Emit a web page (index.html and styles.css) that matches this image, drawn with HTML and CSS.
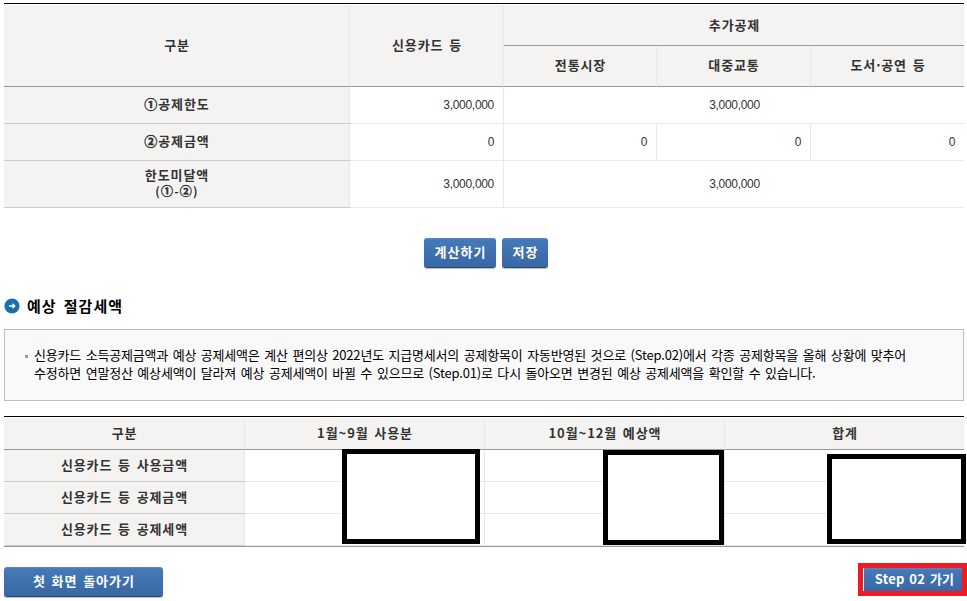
FILE: index.html
```html
<!DOCTYPE html>
<html lang="ko">
<head>
<meta charset="utf-8">
<title>예상 절감세액</title>
<link rel="stylesheet" href="styles.css">
</head>
<body>
<main class="page">
  <section class="grid limits">
    <div class="cell head tall">구분</div>
    <div class="cell head tall">신용카드 등</div>
    <div class="cell head wide group">추가공제</div>
    <div class="cell head">전통시장</div>
    <div class="cell head">대중교통</div>
    <div class="cell head last">도서·공연 등</div>

    <div class="cell label"><span><span class="circled">①</span>공제한도</span></div>
    <div class="cell num">3,000,000</div>
    <div class="cell num wide">3,000,000</div>

    <div class="cell label"><span><span class="circled">②</span>공제금액</span></div>
    <div class="cell num">0</div>
    <div class="cell num">0</div>
    <div class="cell num">0</div>
    <div class="cell num last">0</div>

    <div class="cell label stack"><span>한도미달액</span><span class="formula">(<span class="circled">①</span>-<span class="circled">②</span>)</span></div>
    <div class="cell num">3,000,000</div>
    <div class="cell num wide">3,000,000</div>
  </section>

  <div class="actions">
    <button class="btn calc">계산하기</button>
    <button class="btn save">저장</button>
  </div>

  <h2 class="title">
    <svg class="title-icon" width="16" height="16" viewBox="0 0 16 16">
      <circle cx="8" cy="8" r="7.6" fill="#1b6fae"/>
      <path d="M5 8h5.5M8.5 5.7L10.8 8l-2.3 2.3" fill="none" stroke="#fff" stroke-width="1.3"/>
    </svg>
    <span>예상 절감세액</span>
  </h2>

  <div class="notice">
    <p class="line one">신용카드 소득공제금액과 예상 공제세액은 계산 편의상 2022년도 지급명세서의 공제항목이 자동반영된 것으로 (Step.02)에서 각종 공제항목을 올해 상황에 맞추어</p>
    <p class="line two">수정하면 연말정산 예상세액이 달라져 예상 공제세액이 바뀔 수 있으므로 (Step.01)로 다시 돌아오면 변경된 예상 공제세액을 확인할 수 있습니다.</p>
  </div>

  <section class="grid savings">
    <div class="cell head">구분</div>
    <div class="cell head">1월~9월 사용분</div>
    <div class="cell head">10월~12월 예상액</div>
    <div class="cell head last">합계</div>

    <div class="cell label">신용카드 등 사용금액</div>
    <div class="cell"></div><div class="cell"></div><div class="cell last"></div>
    <div class="cell label">신용카드 등 공제금액</div>
    <div class="cell"></div><div class="cell"></div><div class="cell last"></div>
    <div class="cell label">신용카드 등 공제세액</div>
    <div class="cell"></div><div class="cell"></div><div class="cell last"></div>

    <div class="mask first-mask"></div>
    <div class="mask second-mask"></div>
    <div class="mask third-mask"></div>
  </section>

  <footer class="nav">
    <button class="btn home">첫 화면 돌아가기</button>
    <div class="highlight"><button class="btn next">Step 02 가기</button></div>
  </footer>
</main>
</body>
</html>
```
FILE: styles.css
```css
* { box-sizing: border-box; }
body {
  margin: 0;
  background: #fff;
  color: #333;
  font: 13px/16px "Noto Sans CJK KR", sans-serif;
  overflow: hidden;
}
.page { width: 967px; height: 601px; padding: 3px 0 0 4px; }

.grid {
  display: grid;
  position: relative;
  width: 960px;
  border-top: 1px solid #000;
  padding-top: 1px;
}
.limits {
  grid-template-columns: 346px 154px 153px 154px 153px;
  grid-template-rows: 41px 41px 37px 37px 47px;
}
.savings {
  grid-template-columns: 241px 240px 240px 239px;
  grid-template-rows: 32px 32px 32px 32px;
  border-bottom: 1px solid #999;
}
.cell {
  display: flex;
  align-items: center;
  justify-content: center;
  text-align: center;
  white-space: nowrap;
  border-right: 1px solid #e8e8e8;
  border-bottom: 1px solid #e8e8e8;
}
.head, .label {
  padding: 0 0 2px 1px;
  background: #f5f3f2;
  font-weight: 700;
  letter-spacing: 0.9px;
  word-spacing: 1.2px;
}
.head { border-bottom-color: #999; }
.group { padding-bottom: 0; }
.label { border-bottom-color: #ccc; }
.stack { flex-direction: column; }
.circled { -webkit-text-stroke: 0.4px #333; }
.formula { font-size: 12px; letter-spacing: 1.2px; }
.tall { grid-row: span 2; }
.wide { grid-column: span 3; border-right: 0; }
.last { border-right: 0; }
.num {
  justify-content: flex-end;
  padding-right: 9px;
  font: 12px/16px "Liberation Sans", sans-serif;
  letter-spacing: -0.3px;
}
.num.wide { justify-content: center; padding: 0 0 0 1px; }

.actions { display: flex; justify-content: center; gap: 6px; width: 964px; margin-top: 30px; }
.btn {
  height: 30px;
  padding: 0 0 2px 1px;
  border: 0;
  border-bottom: 1px solid #264a7b;
  border-radius: 3px;
  background: linear-gradient(#5a8ac5 0, #4479b8 2px, #3967a4 100%);
  box-shadow: 0 1px 1px #bbb;
  color: #fff;
  font: 700 13px/16px "Noto Sans CJK KR", sans-serif;
  letter-spacing: 1px;
  word-spacing: 1px;
  white-space: nowrap;
}
.calc { width: 72px; }
.save { width: 46px; }

.title {
  display: flex;
  align-items: center;
  gap: 7px;
  height: 20px;
  margin: 28px 0 0;
  color: #000;
  font-size: 15px;
  letter-spacing: 1px;
  word-spacing: 2px;
}
.title-icon { flex: none; }

.notice {
  width: 960px;
  height: 72px;
  margin-top: 13px;
  padding: 16px 0 0 29px;
  border: 1px solid #bfbfbf;
  background: #f9f9f9;
  color: #000;
}
.line { margin: 0; line-height: 18px; white-space: nowrap; letter-spacing: -0.2px; word-spacing: 1.2px; }
.one::before {
  content: "";
  float: left;
  width: 3px;
  height: 3px;
  margin: 9px 0 0 -9px;
  background: #999;
}

.savings { margin-top: 15px; }
.mask { position: absolute; border: 5px solid #000; background: #fff; }
.first-mask { left: 338px; top: 32px; width: 138px; height: 95px; }
.second-mask { left: 599px; top: 33px; width: 121px; height: 95px; }
.third-mask { left: 823px; top: 37px; width: 139px; height: 90px; }

.nav { display: flex; justify-content: space-between; align-items: flex-start; margin-top: 16px; }
.home { width: 159px; margin-top: 4px; }
.highlight { width: 109px; height: 33px; padding-left: 1px; border: 5px solid #ed1c24; background: #fff; }
.next { display: block; width: 98px; height: 23px; padding: 0 0 2px 3px; border: 0; border-radius: 0; box-shadow: none; letter-spacing: 0.2px; }
```
